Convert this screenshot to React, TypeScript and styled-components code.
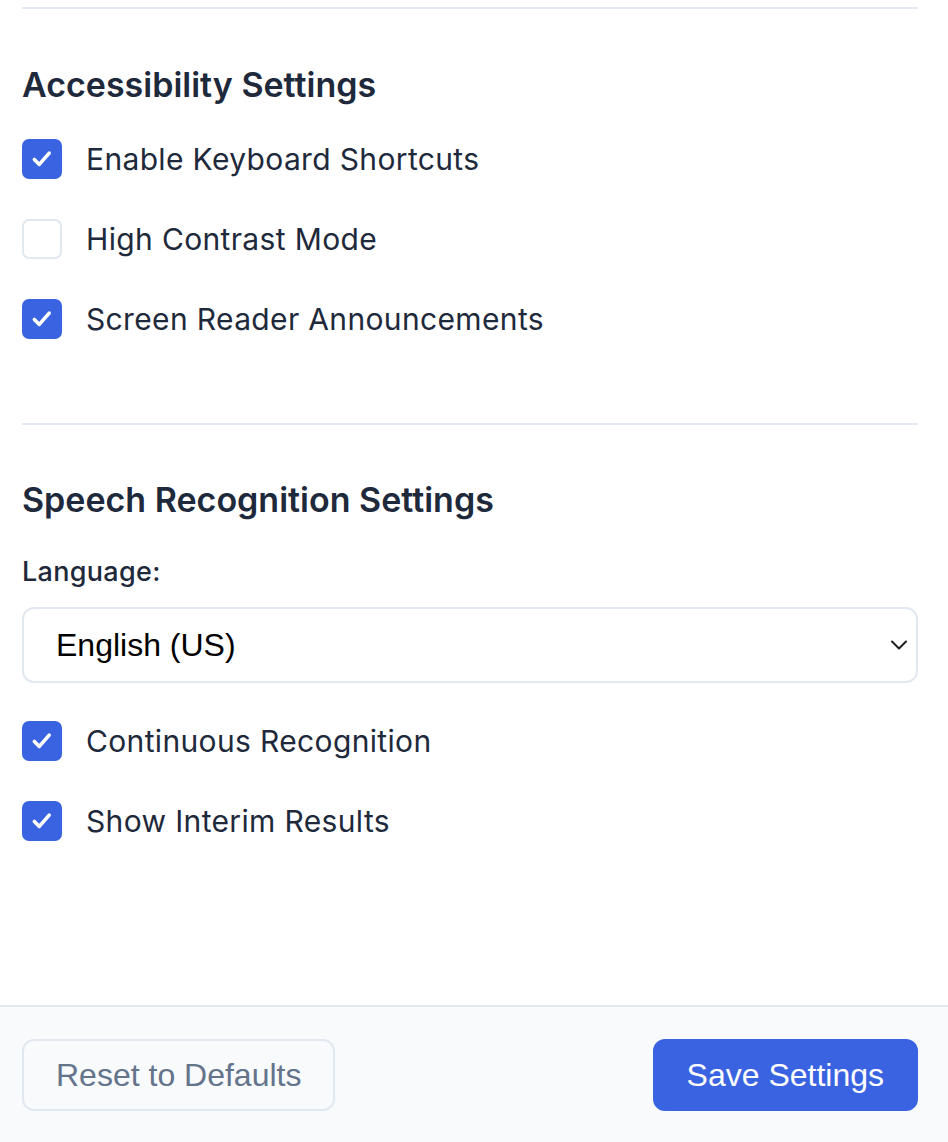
import React, { useState } from "react";
import styled, { createGlobalStyle } from "styled-components";

const GlobalStyle = createGlobalStyle`
  * { box-sizing: border-box; }
  html, body { margin: 0; padding: 0; background: #ffffff; }
  body { font-family: Inter, "Noto Sans", sans-serif; color: #1e293b; }
`;

const Page = styled.div`
  height: 1142px;
  display: flex;
  flex-direction: column;
  background: #ffffff;
`;

const Main = styled.main`
  flex: 1;
  padding: 7px 30px 0 22px;
`;

const Section = styled.section`
  border-top: 2px solid #e2e8f0;
  padding-top: 54px;
  padding-bottom: 84px;
  &:last-child { padding-bottom: 0; padding-top: 53px; }
`;

const Heading = styled.h2`
  margin: 0 0 32px;
  font-size: 34px;
  line-height: 44px;
  font-weight: 560;
  color: #1e293b;
  letter-spacing: 0;
`;

const List = styled.div`
  display: flex;
  flex-direction: column;
  gap: 40px;
`;

const Row = styled.label`
  display: flex;
  align-items: center;
  gap: 24px;
  height: 40px;
  cursor: pointer;
`;

const HiddenInput = styled.input`
  position: absolute;
  opacity: 0;
  width: 0;
  height: 0;
  margin: 0;
`;

const Box = styled.span<{ $checked: boolean }>`
  width: 40px;
  height: 40px;
  flex: none;
  border-radius: 7px;
  display: flex;
  align-items: center;
  justify-content: center;
  background: ${(p) => (p.$checked ? "#3a63e2" : "#ffffff")};
  border: 2px solid ${(p) => (p.$checked ? "#3a63e2" : "#e2e8f0")};
`;

const LabelText = styled.span`
  font-size: 30px;
  line-height: 40px;
  letter-spacing: 0.35px;
  color: #1e293b;
`;

const FieldLabel = styled.label`
  display: block;
  font-size: 27px;
  line-height: 36px;
  font-weight: 500;
  letter-spacing: 0.3px;
  color: #1e293b;
  margin: 1px 0 17px;
`;

const SelectWrap = styled.div`
  position: relative;
  margin-bottom: 38px;
`;

const Select = styled.select`
  appearance: none;
  -webkit-appearance: none;
  width: 100%;
  height: 76px;
  border: 2px solid #e2e8f0;
  border-radius: 12px;
  background: #ffffff;
  padding: 0 60px 0 32px;
  font-family: "Liberation Sans", Arial, sans-serif;
  font-size: 32px;
  color: #000000;
  outline: none;
`;

const Chevron = styled.svg`
  position: absolute;
  right: 10px;
  top: 50%;
  transform: translateY(-50%);
  pointer-events: none;
`;

const Footer = styled.footer`
  height: 137px;
  border-top: 2px solid #e2e8f0;
  background: #f8fafc;
  display: flex;
  align-items: flex-start;
  justify-content: space-between;
  padding: 32px 30px 0 22px;
`;

const Button = styled.button<{ $primary?: boolean }>`
  height: 72px;
  padding: 0 32px;
  border-radius: 12px;
  font-family: "Liberation Sans", Arial, sans-serif;
  font-size: 32px;
  cursor: pointer;
  border: 2px solid ${(p) => (p.$primary ? "#3a63e2" : "#e2e8f0")};
  background: ${(p) => (p.$primary ? "#3a63e2" : "#f8fafc")};
  color: ${(p) => (p.$primary ? "#ffffff" : "#64748b")};
`;

const Check = () => (
  <svg width="40" height="40" viewBox="0 0 40 40">
    <path
      d="M11.5 20.5 L17 26 L28 13.5"
      fill="none"
      stroke="#ffffff"
      strokeWidth="4"
      strokeLinecap="round"
      strokeLinejoin="round"
    />
  </svg>
);

function CheckRow({ label, initial }: { label: string; initial: boolean }) {
  const [checked, setChecked] = useState(initial);
  return (
    <Row>
      <HiddenInput
        type="checkbox"
        checked={checked}
        onChange={() => setChecked(!checked)}
      />
      <Box $checked={checked}>{checked && <Check />}</Box>
      <LabelText>{label}</LabelText>
    </Row>
  );
}

export default function App() {
  return (
    <Page>
      <GlobalStyle />
      <Main>
        <Section>
          <Heading>Accessibility Settings</Heading>
          <List>
            <CheckRow label="Enable Keyboard Shortcuts" initial={true} />
            <CheckRow label="High Contrast Mode" initial={false} />
            <CheckRow label="Screen Reader Announcements" initial={true} />
          </List>
        </Section>
        <Section>
          <Heading>Speech Recognition Settings</Heading>
          <FieldLabel htmlFor="lang">Language:</FieldLabel>
          <SelectWrap>
            <Select id="lang" defaultValue="en-US">
              <option value="en-US">English (US)</option>
              <option value="en-GB">English (UK)</option>
              <option value="es-ES">Spanish</option>
              <option value="fr-FR">French</option>
            </Select>
            <Chevron width="18" height="12" viewBox="0 0 18 12">
              <path
                d="M2 2.5 L9 9.5 L16 2.5"
                fill="none"
                stroke="#1e1e1e"
                strokeWidth="2"
                strokeLinecap="round"
                strokeLinejoin="round"
              />
            </Chevron>
          </SelectWrap>
          <List>
            <CheckRow label="Continuous Recognition" initial={true} />
            <CheckRow label="Show Interim Results" initial={true} />
          </List>
        </Section>
      </Main>
      <Footer>
        <Button>Reset to Defaults</Button>
        <Button $primary>Save Settings</Button>
      </Footer>
    </Page>
  );
}
